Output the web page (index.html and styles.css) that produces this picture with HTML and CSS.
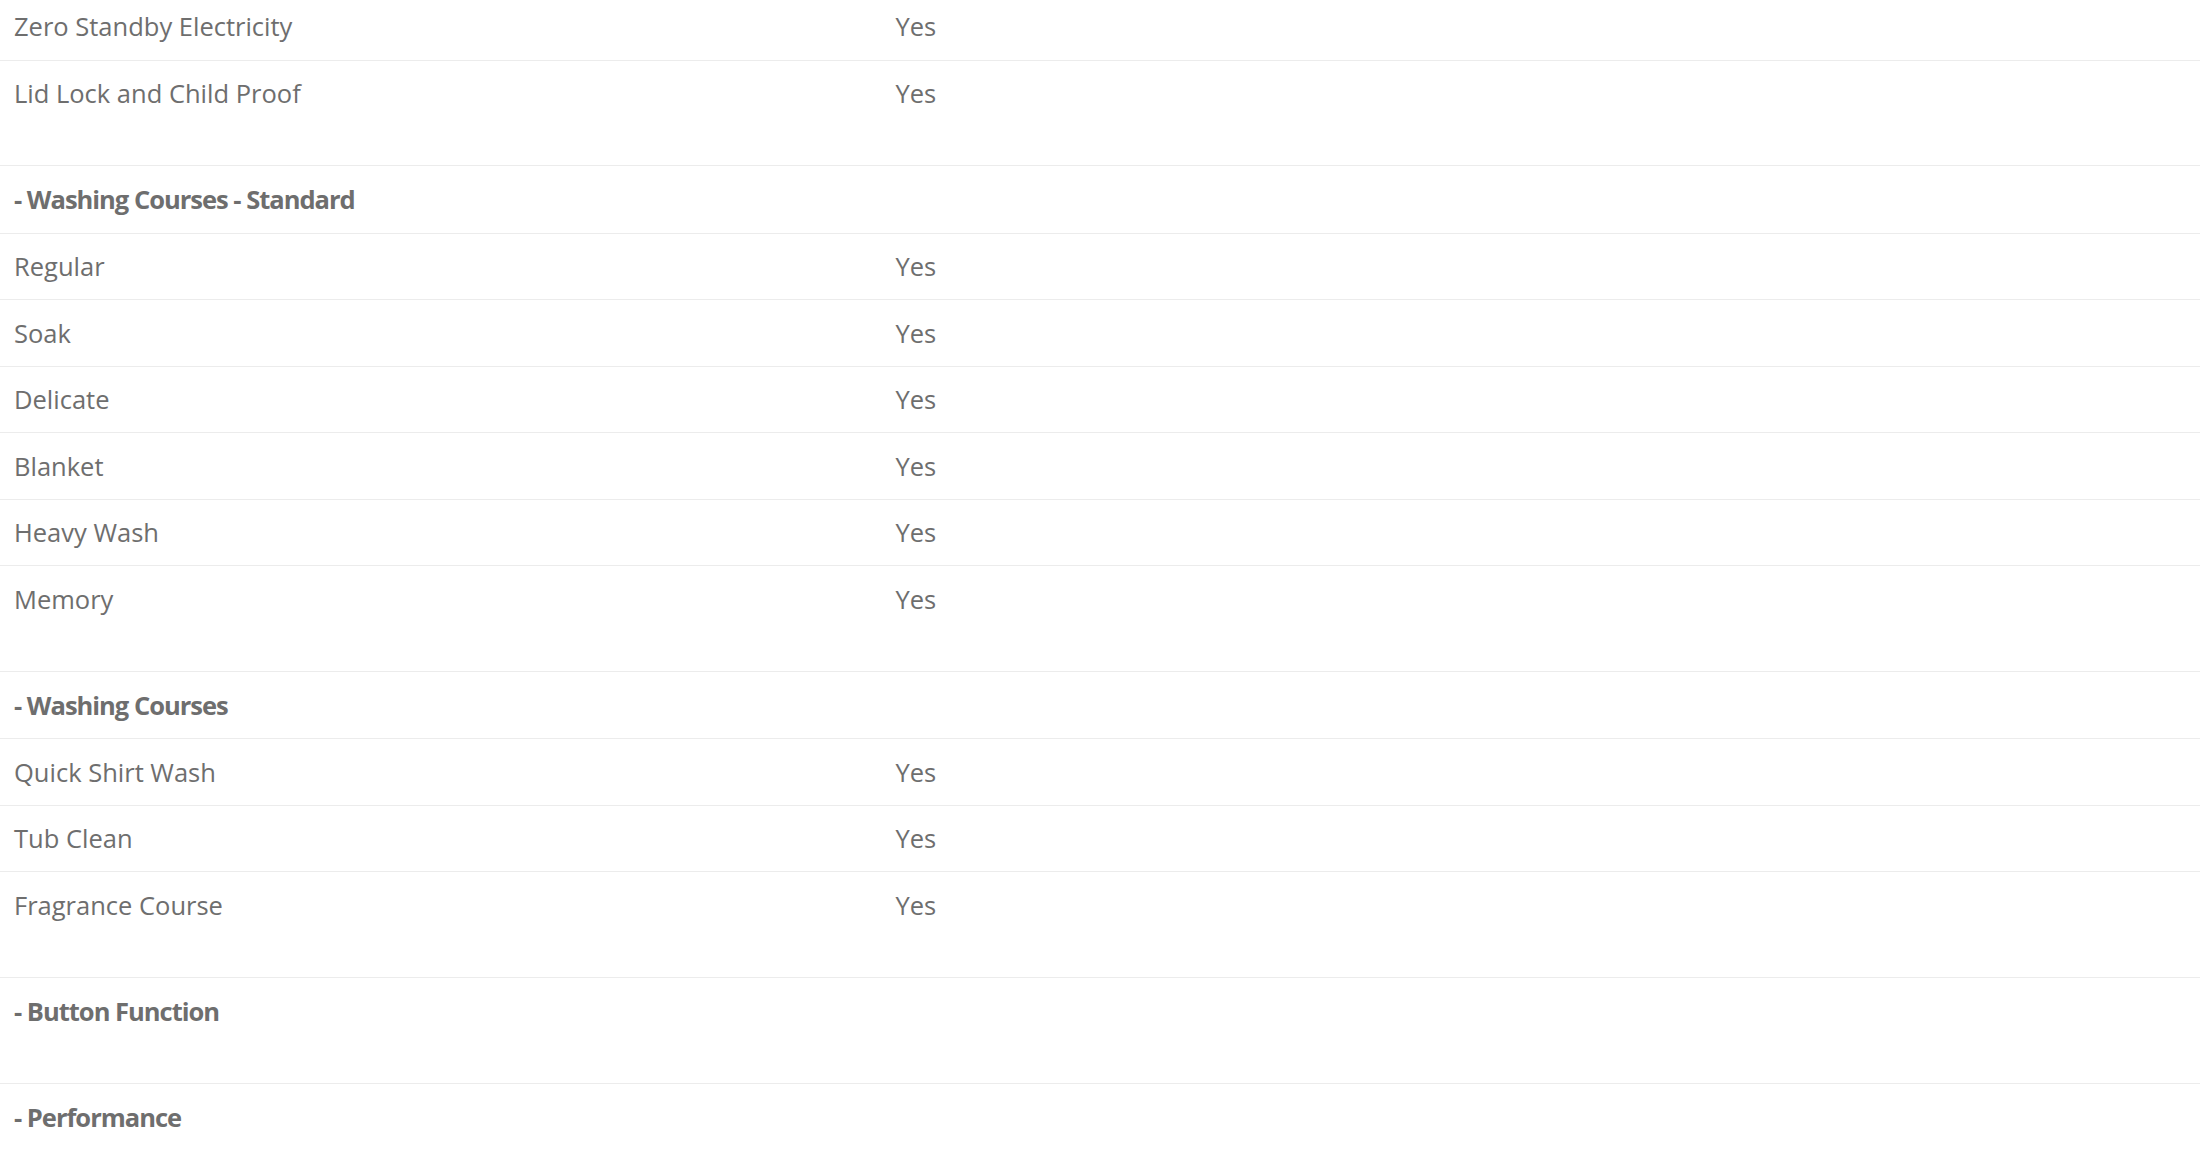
FILE: index.html
```html
<!DOCTYPE html>
<html lang="en">
<head>
<meta charset="utf-8">
<title>Specifications</title>
<link rel="stylesheet" href="styles.css">
</head>
<body>
<div class="specs">
  <section class="group">
    <div class="row"><div class="name">Zero Standby Electricity</div><div class="value">Yes</div></div>
    <div class="row"><div class="name">Lid Lock and Child Proof</div><div class="value">Yes</div></div>
  </section>
  <section class="group">
    <div class="row head"><div class="name">- Washing Courses - Standard</div></div>
    <div class="row"><div class="name">Regular</div><div class="value">Yes</div></div>
    <div class="row"><div class="name">Soak</div><div class="value">Yes</div></div>
    <div class="row"><div class="name">Delicate</div><div class="value">Yes</div></div>
    <div class="row"><div class="name">Blanket</div><div class="value">Yes</div></div>
    <div class="row"><div class="name">Heavy Wash</div><div class="value">Yes</div></div>
    <div class="row"><div class="name">Memory</div><div class="value">Yes</div></div>
  </section>
  <section class="group">
    <div class="row head"><div class="name">- Washing Courses</div></div>
    <div class="row"><div class="name">Quick Shirt Wash</div><div class="value">Yes</div></div>
    <div class="row"><div class="name">Tub Clean</div><div class="value">Yes</div></div>
    <div class="row"><div class="name">Fragrance Course</div><div class="value">Yes</div></div>
  </section>
  <section class="group">
    <div class="row head"><div class="name">- Button Function</div></div>
  </section>
  <section class="group">
    <div class="row head"><div class="name">- Performance</div></div>
  </section>
</div>
</body>
</html>
```
FILE: styles.css
```css
html, body {
  margin: 0;
  padding: 0;
  background: #ffffff;
}
body {
  font-family: "Open Sans", "Noto Sans", "Liberation Sans", sans-serif;
  color: #6e6e6e;
  overflow: hidden;
}
.specs {
  margin-top: -8px;
}
.group {
  border-top: 1.5px solid #ececec;
  padding-bottom: 39px;
}
.row {
  display: grid;
  grid-template-columns: 880px 1fr;
  height: 66.5px;
  align-items: center;
  border-top: 1.5px solid #ececec;
  box-sizing: border-box;
  font-size: 25.5px;
  letter-spacing: 0;
}
.group .row:first-child {
  border-top: none;
}
.name {
  padding-left: 14px;
}
.value {
  padding-left: 15.5px;
}
.head .name {
  font-weight: 700;
  letter-spacing: -1px;
}
```
